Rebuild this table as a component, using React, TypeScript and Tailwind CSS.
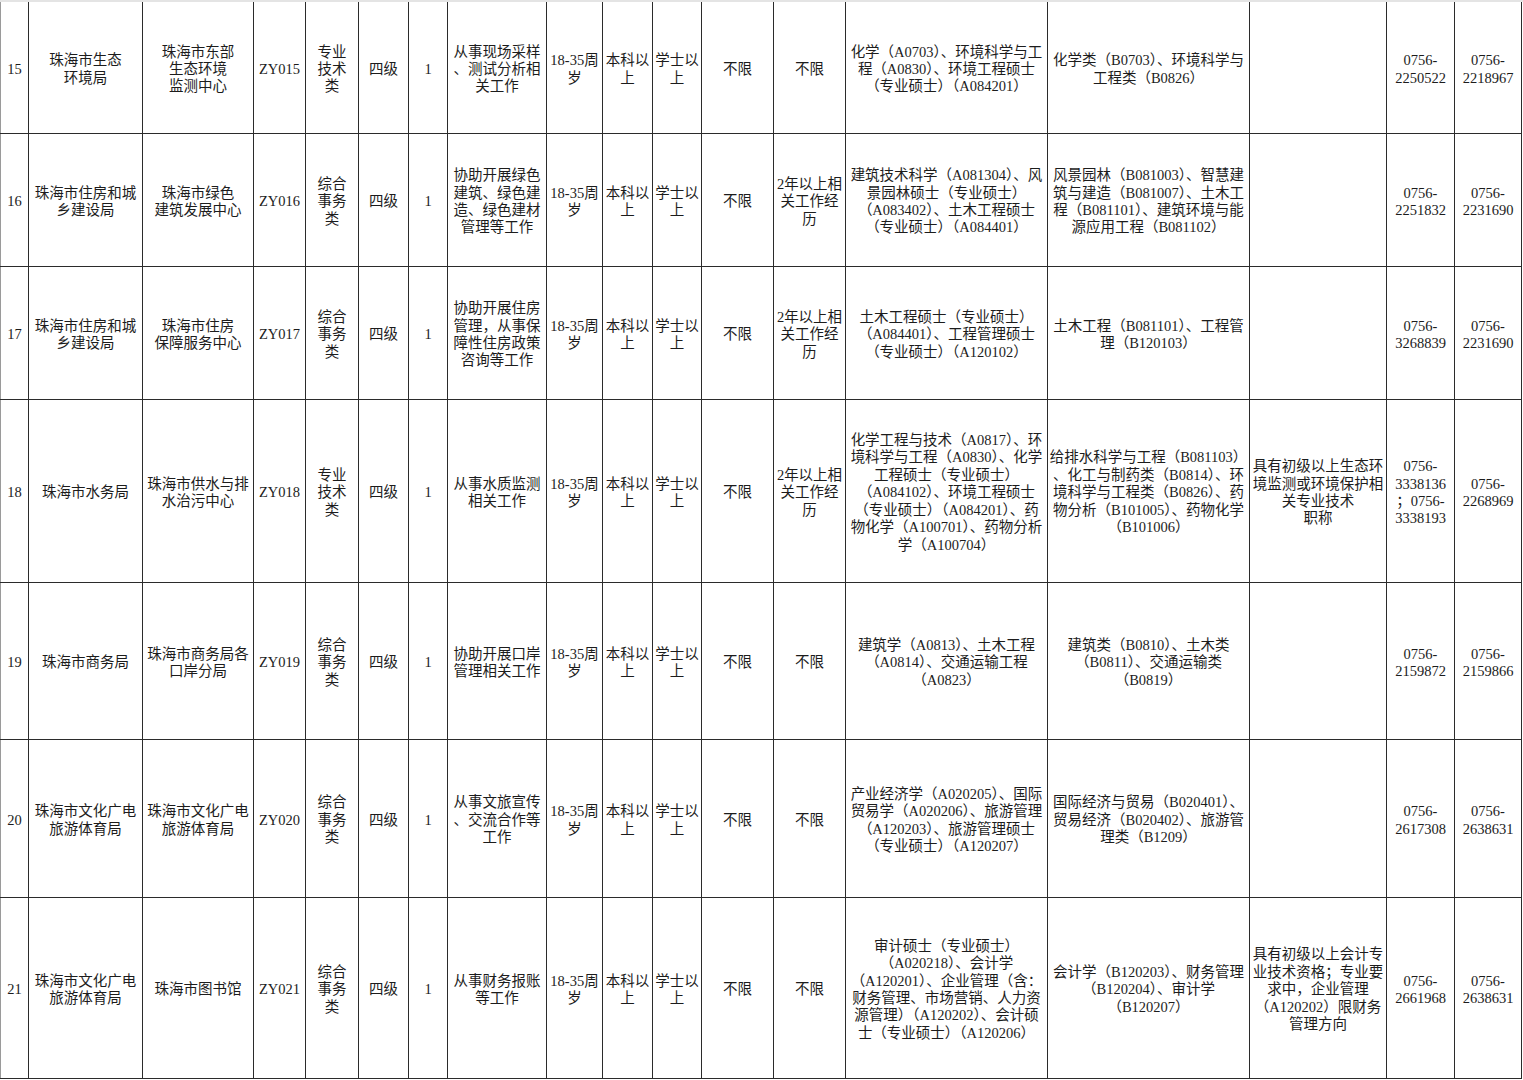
import React from "react";

const colWidths = [
  "w-[28px]",
  "w-[114px]",
  "w-[111px]",
  "w-[52px]",
  "w-[53px]",
  "w-[50px]",
  "w-[39px]",
  "w-[99px]",
  "w-[56px]",
  "w-[50px]",
  "w-[49px]",
  "w-[72px]",
  "w-[72px]",
  "w-[202px]",
  "w-[202px]",
  "w-[137px]",
  "w-[68px]",
  "w-[67px]",
];

type Row = { h: string; cells: string[] };

const rows: Row[] = [
  {
    h: "h-[131px]",
    cells: [
      "15",
      "珠海市生态\n环境局",
      "珠海市东部\n生态环境\n监测中心",
      "ZY015",
      "专业\n技术\n类",
      "四级",
      "1",
      "从事现场采样\n、测试分析相\n关工作",
      "18-35周\n岁",
      "本科以\n上",
      "学士以\n上",
      "不限",
      "不限",
      "化学（A0703）、环境科学与工\n程（A0830）、环境工程硕士\n（专业硕士）（A084201）",
      "化学类（B0703）、环境科学与\n工程类（B0826）",
      "",
      "0756-\n2250522",
      "0756-\n2218967",
    ],
  },
  {
    h: "h-[133px]",
    cells: [
      "16",
      "珠海市住房和城\n乡建设局",
      "珠海市绿色\n建筑发展中心",
      "ZY016",
      "综合\n事务\n类",
      "四级",
      "1",
      "协助开展绿色\n建筑、绿色建\n造、绿色建材\n管理等工作",
      "18-35周\n岁",
      "本科以\n上",
      "学士以\n上",
      "不限",
      "2年以上相\n关工作经\n历",
      "建筑技术科学（A081304）、风\n景园林硕士（专业硕士）\n（A083402）、土木工程硕士\n（专业硕士）（A084401）",
      "风景园林（B081003）、智慧建\n筑与建造（B081007）、土木工\n程（B081101）、建筑环境与能\n源应用工程（B081102）",
      "",
      "0756-\n2251832",
      "0756-\n2231690",
    ],
  },
  {
    h: "h-[133px]",
    cells: [
      "17",
      "珠海市住房和城\n乡建设局",
      "珠海市住房\n保障服务中心",
      "ZY017",
      "综合\n事务\n类",
      "四级",
      "1",
      "协助开展住房\n管理，从事保\n障性住房政策\n咨询等工作",
      "18-35周\n岁",
      "本科以\n上",
      "学士以\n上",
      "不限",
      "2年以上相\n关工作经\n历",
      "土木工程硕士（专业硕士）\n（A084401）、工程管理硕士\n（专业硕士）（A120102）",
      "土木工程（B081101）、工程管\n理（B120103）",
      "",
      "0756-\n3268839",
      "0756-\n2231690",
    ],
  },
  {
    h: "h-[183px]",
    cells: [
      "18",
      "珠海市水务局",
      "珠海市供水与排\n水治污中心",
      "ZY018",
      "专业\n技术\n类",
      "四级",
      "1",
      "从事水质监测\n相关工作",
      "18-35周\n岁",
      "本科以\n上",
      "学士以\n上",
      "不限",
      "2年以上相\n关工作经\n历",
      "化学工程与技术（A0817）、环\n境科学与工程（A0830）、化学\n工程硕士（专业硕士）\n（A084102）、环境工程硕士\n（专业硕士）（A084201）、药\n物化学（A100701）、药物分析\n学（A100704）",
      "给排水科学与工程（B081103）\n、化工与制药类（B0814）、环\n境科学与工程类（B0826）、药\n物分析（B101005）、药物化学\n（B101006）",
      "具有初级以上生态环\n境监测或环境保护相\n关专业技术\n职称",
      "0756-\n3338136\n；0756-\n3338193",
      "0756-\n2268969",
    ],
  },
  {
    h: "h-[157px]",
    cells: [
      "19",
      "珠海市商务局",
      "珠海市商务局各\n口岸分局",
      "ZY019",
      "综合\n事务\n类",
      "四级",
      "1",
      "协助开展口岸\n管理相关工作",
      "18-35周\n岁",
      "本科以\n上",
      "学士以\n上",
      "不限",
      "不限",
      "建筑学（A0813）、土木工程\n（A0814）、交通运输工程\n（A0823）",
      "建筑类（B0810）、土木类\n（B0811）、交通运输类\n（B0819）",
      "",
      "0756-\n2159872",
      "0756-\n2159866",
    ],
  },
  {
    h: "h-[158px]",
    cells: [
      "20",
      "珠海市文化广电\n旅游体育局",
      "珠海市文化广电\n旅游体育局",
      "ZY020",
      "综合\n事务\n类",
      "四级",
      "1",
      "从事文旅宣传\n、交流合作等\n工作",
      "18-35周\n岁",
      "本科以\n上",
      "学士以\n上",
      "不限",
      "不限",
      "产业经济学（A020205）、国际\n贸易学（A020206）、旅游管理\n（A120203）、旅游管理硕士\n（专业硕士）（A120207）",
      "国际经济与贸易（B020401）、\n贸易经济（B020402）、旅游管\n理类（B1209）",
      "",
      "0756-\n2617308",
      "0756-\n2638631",
    ],
  },
  {
    h: "h-[181px]",
    cells: [
      "21",
      "珠海市文化广电\n旅游体育局",
      "珠海市图书馆",
      "ZY021",
      "综合\n事务\n类",
      "四级",
      "1",
      "从事财务报账\n等工作",
      "18-35周\n岁",
      "本科以\n上",
      "学士以\n上",
      "不限",
      "不限",
      "审计硕士（专业硕士）\n（A020218）、会计学\n（A120201）、企业管理（含：\n财务管理、市场营销、人力资\n源管理）（A120202）、会计硕\n士（专业硕士）（A120206）",
      "会计学（B120203）、财务管理\n（B120204）、审计学\n（B120207）",
      "具有初级以上会计专\n业技术资格；专业要\n求中，企业管理\n（A120202）限财务\n管理方向",
      "0756-\n2661968",
      "0756-\n2638631",
    ],
  },
];

function Cell({ text, first, edge }: { text: string; first: boolean; edge: boolean }) {
  return (
    <td
      className={
        "p-0 pt-[5px] text-center align-middle border border-[#2b2b2b] " +
        (first ? "border-t-0 " : "") +
        (edge ? "border-l-[#9a9a9a]" : "")
      }
    >
      {text.split("\n").map((line, i) => (
        <div key={i} className="whitespace-nowrap">
          {line}
        </div>
      ))}
    </td>
  );
}

export default function App() {
  return (
    <div className="bg-white min-h-screen w-[1523px] font-['Liberation_Serif','Noto_Sans_CJK_SC',serif] text-[14.5px] leading-[17.4px] text-[#1c1c1c]">
      <div className="h-[2px] w-full bg-[#e4e4e4]"></div>
      <table className="table-fixed border-collapse w-[1522px]">
        <colgroup>
          {colWidths.map((w, i) => (
            <col key={i} className={w} />
          ))}
        </colgroup>
        <tbody>
          {rows.map((row, r) => (
            <tr key={r} className={row.h}>
              {row.cells.map((c, i) => (
                <Cell key={i} text={c} first={r === 0} edge={i === 0} />
              ))}
            </tr>
          ))}
        </tbody>
      </table>
    </div>
  );
}
